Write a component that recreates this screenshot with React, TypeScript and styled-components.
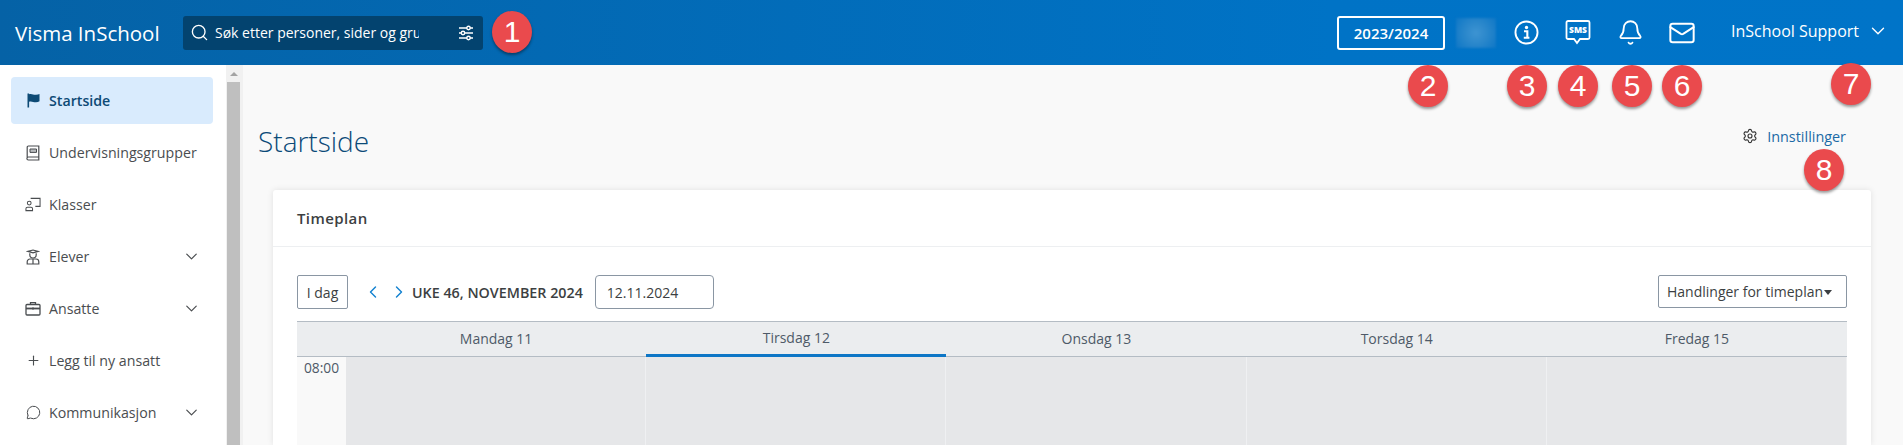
import * as React from "react";
import styled, { createGlobalStyle } from "styled-components";
import {
  Bell,
  ChevronDown,
  ChevronLeft,
  ChevronRight,
  Mail,
  MessageCircle,
  Plus,
  Search,
  Settings,
} from "lucide-react";

const GlobalStyle = createGlobalStyle`
  html, body { margin: 0; padding: 0; height: 100%; overflow: hidden; background: #f9f9f9; }
  * { box-sizing: border-box; }
  body { font-family: "Open Sans", "Noto Sans", sans-serif; color: #494949; }
`;

const Page = styled.div`
  position: relative;
  width: 1903px;
  height: 445px;
  overflow: hidden;
  display: flex;
  flex-direction: column;
`;

const Topbar = styled.header`
  flex: 0 0 65px;
  display: flex;
  align-items: center;
  justify-content: space-between;
  padding: 0 0 0 15px;
  background: linear-gradient(90deg, #0562a6 0%, #0073c6 70%, #0074c8 100%);
  color: #fff;
`;

const TopLeft = styled.div`
  display: flex;
  align-items: center;
  gap: 24px;
`;

const Brand = styled.div`
  width: 144px;
  font-size: 20.5px;
  white-space: nowrap;
`;

const SearchBox = styled.div`
  width: 300px;
  height: 34px;
  padding: 0 9px 0 7px;
  border-radius: 3px;
  background: #03436f;
  display: flex;
  align-items: center;
`;

const SearchText = styled.div`
  width: 204px;
  margin: 0 auto 0 6px;
  overflow: hidden;
  white-space: nowrap;
  font-size: 14px;
`;

const TopRight = styled.div`
  display: flex;
  align-items: center;
`;

const YearButton = styled.div`
  width: 108px;
  height: 34px;
  border: 2px solid #fff;
  border-radius: 3px;
  display: flex;
  align-items: center;
  justify-content: center;
  font-size: 15px;
  font-weight: 600;
`;

const Blurred = styled.div`
  width: 40px;
  height: 30px;
  margin: 0 4px 0 11px;
  background: radial-gradient(circle at 50% 50%, #3e94d2 0%, #2a87cb 45%, #0d77c6 100%);
  filter: blur(1px);
`;

const IconSlot = styled.div`
  width: 52px;
  height: 34px;
  display: flex;
  align-items: center;
  justify-content: center;
`;

const UserMenu = styled.div`
  margin-left: 23px;
  width: 172px;
  height: 34px;
  padding-bottom: 4px;
  display: flex;
  align-items: center;
  font-size: 16px;
  white-space: nowrap;
  gap: 8px;
`;

const Body = styled.div`
  flex: 1;
  min-height: 0;
  display: flex;
`;

const Sidebar = styled.nav`
  width: 226px;
  padding: 12px 13px 0 11px;
  background: #fff;
  overflow: hidden;
`;

const NavItem = styled.div<{ $active?: boolean }>`
  height: 47px;
  margin-bottom: 5px;
  padding: 0 12px 0 14px;
  display: flex;
  align-items: center;
  gap: 8px;
  border-radius: 4px;
  font-size: 14.2px;
  font-weight: ${(p) => (p.$active ? 600 : 400)};
  color: ${(p) => (p.$active ? "#0d4a75" : "#4a4d50")};
  background: ${(p) => (p.$active ? "#d9ebfd" : "transparent")};
`;

const NavIcon = styled.span`
  width: 16px;
  display: flex;
  justify-content: center;
  flex: none;
`;

const NavLabel = styled.span`
  flex: 1;
  white-space: nowrap;
`;

const Scrollbar = styled.div`
  width: 17px;
  background: #f1f1f1;
  display: flex;
  flex-direction: column;
  padding-left: 1px;
`;

const ScrollArrow = styled.div`
  height: 17px;
  width: 13px;
  display: flex;
  align-items: center;
  justify-content: center;

  &::before {
    content: "";
    border-left: 4px solid transparent;
    border-right: 4px solid transparent;
    border-bottom: 4px solid #a3a3a3;
  }
`;

const ScrollThumb = styled.div`
  width: 13px;
  flex: 1;
  background: #bfbfbf;
`;

const Main = styled.main`
  flex: 1;
  min-width: 0;
  padding-left: 15px;
  padding-right: 32px;
  display: flex;
  flex-direction: column;
`;

const PageHead = styled.div`
  flex: 0 0 125px;
  display: flex;
  align-items: flex-start;
  justify-content: space-between;
  padding: 54px 25px 0 0;
`;

const PageTitle = styled.h1`
  margin: 3px 0 0;
  font-size: 28px;
  line-height: 38px;
  font-weight: 300;
  color: #0b4a78;
`;

const SettingsLink = styled.a`
  display: flex;
  align-items: center;
  gap: 9px;
  height: 34px;
  font-size: 14.4px;
  color: #1b6aa6;
`;

const Card = styled.section`
  flex: 1;
  min-height: 0;
  margin-left: 15px;
  background: #fff;
  border-radius: 3px 3px 0 0;
  box-shadow: 0 0 6px rgba(0, 0, 0, 0.1);
  display: flex;
  flex-direction: column;
`;

const CardHeader = styled.div`
  flex: 0 0 57px;
  padding-left: 24px;
  display: flex;
  align-items: center;
  border-bottom: 1px solid #edeff1;
  font-size: 15px;
  font-weight: 600;
  letter-spacing: 0.4px;
  color: #3c3f42;
`;

const CardBody = styled.div`
  flex: 1;
  min-height: 0;
  padding: 28px 24px 0;
  display: flex;
  flex-direction: column;
`;

const Toolbar = styled.div`
  flex: 0 0 46px;
  display: flex;
  align-items: flex-start;
`;

const DayButton = styled.div`
  width: 51px;
  height: 34px;
  border: 1px solid #8a96a3;
  border-radius: 2px;
  display: flex;
  align-items: center;
  justify-content: center;
  font-size: 14px;
  color: #3c3f42;
`;

const WeekNav = styled.div`
  height: 34px;
  margin-left: 15px;
  display: flex;
  align-items: center;
  gap: 6px;
  color: #1482d0;
`;

const WeekLabel = styled.div`
  height: 34px;
  margin-left: 3px;
  display: flex;
  align-items: center;
  font-size: 14.3px;
  font-weight: 600;
  white-space: nowrap;
  color: #3c3f42;
`;

const DateInput = styled.div`
  width: 119px;
  height: 34px;
  margin-left: 12px;
  padding: 1px 0 0 11px;
  border: 1px solid #8a96a3;
  border-radius: 4px;
  display: flex;
  align-items: center;
  font-size: 14px;
  color: #3c3f42;
`;

const ActionsButton = styled.div`
  width: 189px;
  height: 33px;
  margin-left: auto;
  padding-left: 8px;
  border: 1px solid #8a96a3;
  border-radius: 2px;
  display: flex;
  align-items: center;
  font-size: 14px;
  font-weight: 500;
  white-space: nowrap;
  color: #3c3f42;

  &::after {
    content: "";
    margin: 1px 0 0 1px;
    border-left: 4.5px solid transparent;
    border-right: 4.5px solid transparent;
    border-top: 5px solid #3c3f42;
  }
`;

const Schedule = styled.div`
  flex: 1;
  min-height: 0;
  display: grid;
  grid-template-columns: 49px repeat(5, 1fr);
  grid-template-rows: 36px 1fr;
`;

const DayHead = styled.div<{ $today?: boolean }>`
  display: flex;
  align-items: center;
  justify-content: center;
  padding-bottom: 2px;
  background: #ebedef;
  border-top: 1px solid #b4bcc4;
  border-bottom: ${(p) => (p.$today ? "3px solid #0d76c6" : "1px solid #b4bcc4")};
  font-size: 14px;
  color: #4e5a68;
`;

const TimeCell = styled.div`
  padding-top: 1px;
  text-align: center;
  background: #f9f9f9;
  font-size: 13.8px;
  color: #4e5a68;
`;

const DayCell = styled.div`
  background: #e6e7e9;
  border-right: 1px solid #eff0f2;
`;

const Marker = styled.div<{ $x: number; $y: number }>`
  position: absolute;
  left: ${(p) => p.$x - 20}px;
  top: ${(p) => p.$y - 21}px;
  width: 40px;
  height: 42px;
  border-radius: 50%;
  background: #ea4a4d;
  box-shadow: 0 2px 3px rgba(0, 0, 0, 0.4);
  color: #fff;
  display: flex;
  align-items: center;
  justify-content: center;
  font-family: "Liberation Sans", Arial, sans-serif;
  font-size: 30px;
`;

const InfoIcon = () => (
  <svg width="25" height="25" viewBox="0 0 24 24" fill="none" stroke="#fff">
    <circle cx="12" cy="12" r="10.6" strokeWidth="1.8" />
    <circle cx="12" cy="7.2" r="1.6" fill="#fff" stroke="none" />
    <path d="M9.6 10.8h3.2v6M9.4 17h5.4" strokeWidth="2" />
  </svg>
);

const SmsIcon = () => (
  <svg width="26" height="28" viewBox="0 0 26 28" fill="none">
    <path
      d="M3 2h20a1.5 1.5 0 0 1 1.5 1.5v15a1.5 1.5 0 0 1-1.5 1.5h-8l-3 4-3-4H3a1.5 1.5 0 0 1-1.5-1.5v-15A1.5 1.5 0 0 1 3 2z"
      stroke="#fff"
      strokeWidth="1.8"
    />
    <text x="13" y="14" textAnchor="middle" fontSize="8.5" fontWeight="800" fill="#fff" fontFamily="Open Sans">
      SMS
    </text>
  </svg>
);

const SlidersIcon = () => (
  <svg width="16" height="16" viewBox="0 0 16 16" fill="none" stroke="#fff" strokeWidth="1.4">
    <path d="M1 3h14M1 8h14M1 13h14" />
    <circle cx="10.5" cy="3" r="1.7" fill="#03436f" />
    <circle cx="5" cy="8" r="1.7" fill="#03436f" />
    <circle cx="10.5" cy="13" r="1.7" fill="#03436f" />
  </svg>
);

const FlagIcon = () => (
  <svg width="13" height="15" viewBox="0 0 13 15" fill="#0d4a75">
    <rect x="0.5" y="0.5" width="1.6" height="14" />
    <path d="M2 1.2c3-1 4.5 1 7 .6 1.4-.2 2.6-.5 3.5-.9v7.4c-1 .6-2.2.9-3.5 1-2.6.2-4-1.5-7-.6z" />
  </svg>
);

const BookIcon = () => (
  <svg width="14" height="16" viewBox="0 0 14 16" fill="none" stroke="#4a4d50" strokeWidth="1.2">
    <path d="M1.2 13V2.2A1.2 1.2 0 0 1 2.4 1h10.4v11H2.4a1.2 1.2 0 0 0 0 3h10.4v-3" />
    <path d="M4 4h6.5v3.4H4z" fill="#b9bcbf" strokeWidth="1" />
  </svg>
);

const ClassIcon = () => (
  <svg width="17" height="15" viewBox="0 0 17 15" fill="none" stroke="#4a4d50" strokeWidth="1.1">
    <path d="M6 1h10v8.5h-5" />
    <circle cx="4.5" cy="6" r="2" />
    <path d="M1 14v-2a1.6 1.6 0 0 1 1.6-1.6h3.8A1.6 1.6 0 0 1 8 12v2z" />
  </svg>
);

const StudentIcon = () => (
  <svg width="14" height="16" viewBox="0 0 14 16" fill="none" stroke="#4a4d50" strokeWidth="1.2">
    <path d="M2 2.4 7 1l5 1.4L7 3.8z" />
    <path d="M3.8 4.2v1.6a3.2 3.2 0 0 0 6.4 0V4.2" />
    <path d="M1.2 15v-2.2A2.8 2.8 0 0 1 4 10h6a2.8 2.8 0 0 1 2.8 2.8V15z" />
    <path d="M7 10v5" />
  </svg>
);

const CaseIcon = () => (
  <svg width="16" height="15" viewBox="0 0 16 15" fill="none" stroke="#4a4d50" strokeWidth="1.3">
    <rect x="1" y="3.5" width="14" height="10.5" rx="1" />
    <path d="M5.5 3.5V1.6h5v1.9" />
    <path d="M1 7.5h14" strokeWidth="1.8" />
    <path d="M8 6.6v2" strokeWidth="1.6" />
  </svg>
);

const navItems = [
  { label: "Startside", icon: <FlagIcon />, active: true },
  { label: "Undervisningsgrupper", icon: <BookIcon /> },
  { label: "Klasser", icon: <ClassIcon /> },
  { label: "Elever", icon: <StudentIcon />, more: true },
  { label: "Ansatte", icon: <CaseIcon />, more: true },
  { label: "Legg til ny ansatt", icon: <Plus size={15} color="#4a4d50" strokeWidth={1.8} /> },
  { label: "Kommunikasjon", icon: <MessageCircle size={15} color="#4a4d50" strokeWidth={1.6} />, more: true },
];

const days = ["Mandag 11", "Tirsdag 12", "Onsdag 13", "Torsdag 14", "Fredag 15"];

const markers = [
  { n: 1, x: 512, y: 32 },
  { n: 2, x: 1428, y: 86 },
  { n: 3, x: 1527, y: 86 },
  { n: 4, x: 1578, y: 86 },
  { n: 5, x: 1632, y: 86 },
  { n: 6, x: 1682, y: 86 },
  { n: 7, x: 1851, y: 84 },
  { n: 8, x: 1824, y: 170 },
];

const App = () => {
  return (
    <Page>
      <GlobalStyle />
      <Topbar>
        <TopLeft>
          <Brand>Visma InSchool</Brand>
          <SearchBox>
            <Search size={19} color="#fff" strokeWidth={1.7} />
            <SearchText>Søk etter personer, sider og grupper</SearchText>
            <SlidersIcon />
          </SearchBox>
        </TopLeft>
        <TopRight>
          <YearButton>2023/2024</YearButton>
          <Blurred />
          <IconSlot>
            <InfoIcon />
          </IconSlot>
          <IconSlot>
            <SmsIcon />
          </IconSlot>
          <IconSlot>
            <Bell size={27} color="#fff" strokeWidth={1.6} />
          </IconSlot>
          <IconSlot>
            <Mail size={28} color="#fff" strokeWidth={1.7} />
          </IconSlot>
          <UserMenu>
            InSchool Support
            <ChevronDown size={22} color="#fff" strokeWidth={1.5} />
          </UserMenu>
        </TopRight>
      </Topbar>
      <Body>
        <Sidebar>
          {navItems.map((item) => (
            <NavItem key={item.label} $active={item.active}>
              <NavIcon>{item.icon}</NavIcon>
              <NavLabel>{item.label}</NavLabel>
              {item.more && <ChevronDown size={19} color="#4a4d50" strokeWidth={1.5} />}
            </NavItem>
          ))}
        </Sidebar>
        <Scrollbar>
          <ScrollArrow />
          <ScrollThumb />
        </Scrollbar>
        <Main>
          <PageHead>
            <PageTitle>Startside</PageTitle>
            <SettingsLink>
              <Settings size={16} color="#333" strokeWidth={1.7} />
              Innstillinger
            </SettingsLink>
          </PageHead>
          <Card>
            <CardHeader>Timeplan</CardHeader>
            <CardBody>
              <Toolbar>
                <DayButton>I dag</DayButton>
                <WeekNav>
                  <ChevronLeft size={20} strokeWidth={1.7} />
                  <ChevronRight size={20} strokeWidth={1.7} />
                </WeekNav>
                <WeekLabel>UKE 46, NOVEMBER 2024</WeekLabel>
                <DateInput>12.11.2024</DateInput>
                <ActionsButton>Handlinger for timeplan</ActionsButton>
              </Toolbar>
              <Schedule>
                <DayHead />
                {days.map((day) => (
                  <DayHead key={day} $today={day === "Tirsdag 12"}>
                    {day}
                  </DayHead>
                ))}
                <TimeCell>08:00</TimeCell>
                {days.map((day) => (
                  <DayCell key={day} />
                ))}
              </Schedule>
            </CardBody>
          </Card>
        </Main>
      </Body>
      {markers.map((m) => (
        <Marker key={m.n} $x={m.x} $y={m.y}>
          {m.n}
        </Marker>
      ))}
    </Page>
  );
};

export default App;
